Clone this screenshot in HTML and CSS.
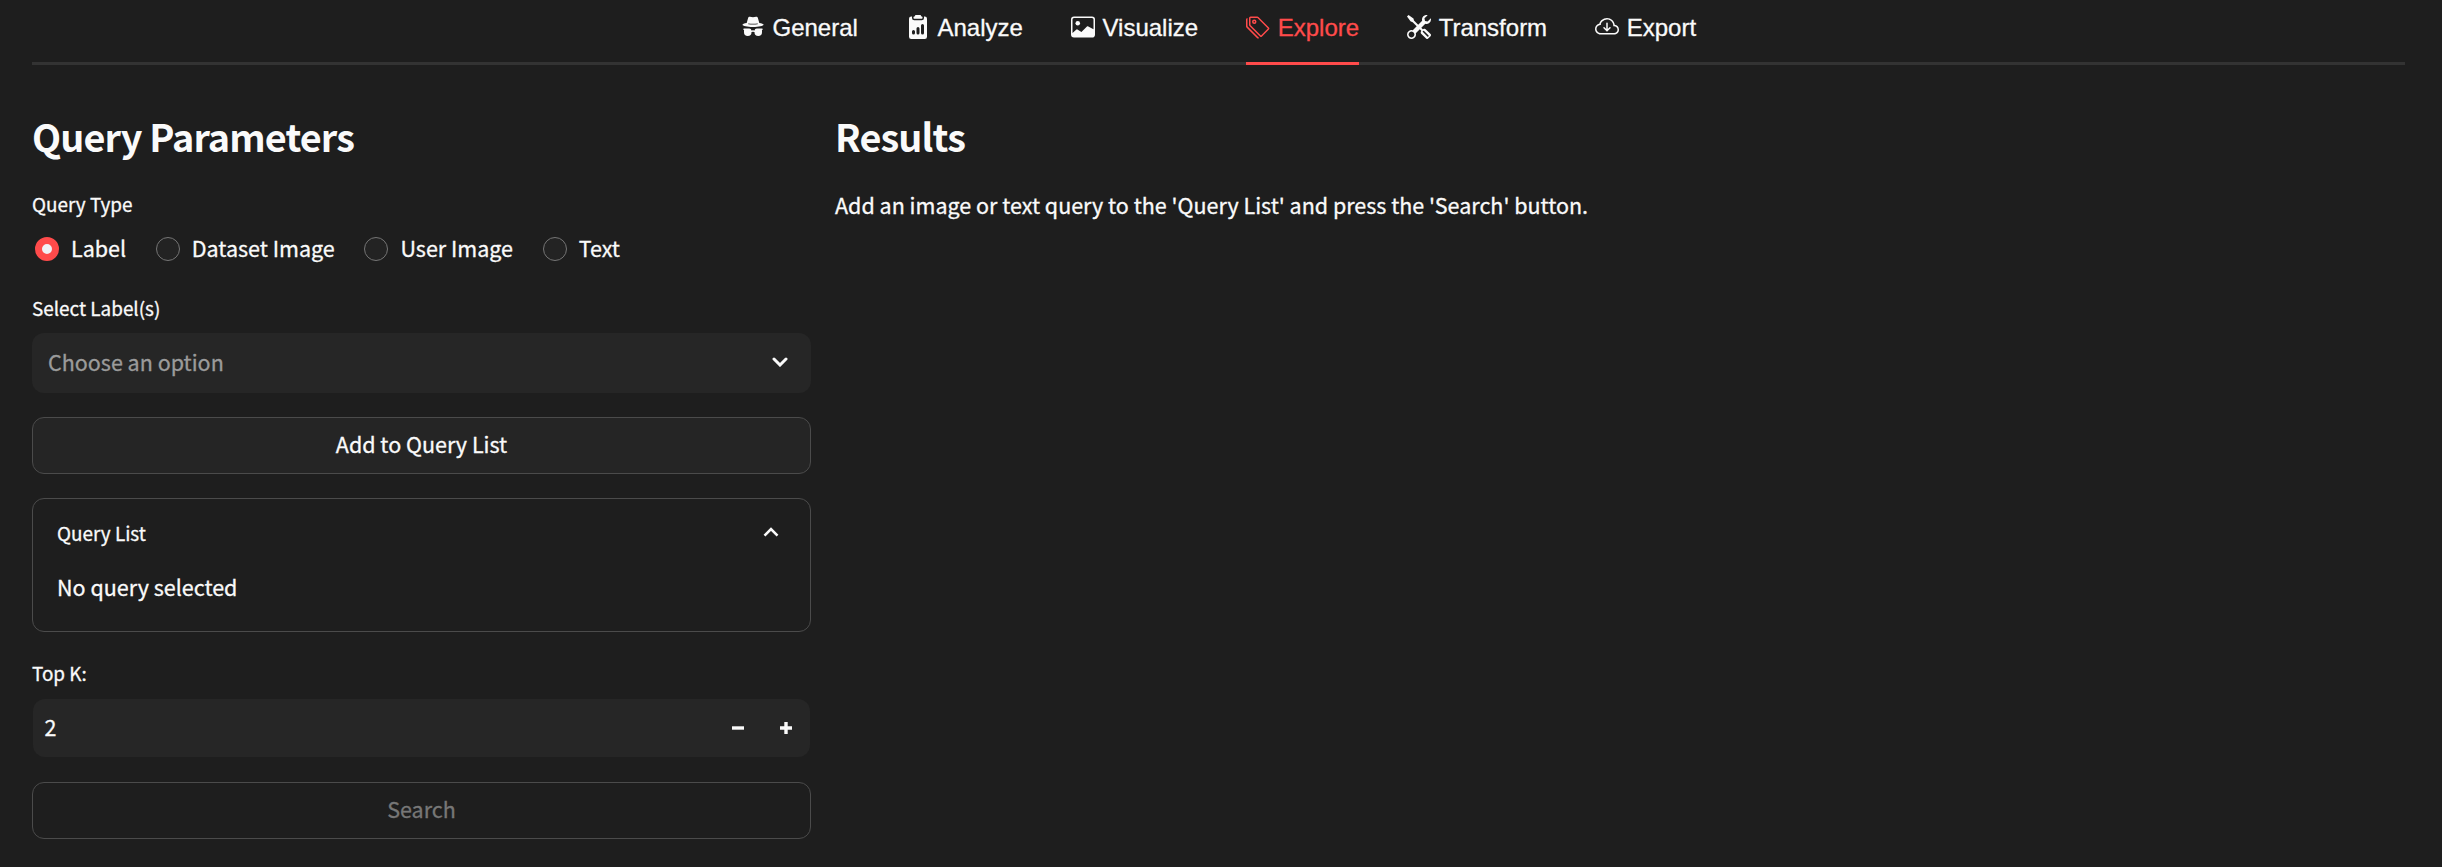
FILE: index.html
```html
<!DOCTYPE html>
<html lang="en">
<head>
<meta charset="utf-8">
<title>Explore</title>
<link rel="stylesheet" href="styles.css">
</head>
<body>
<nav class="tabs">
  <a class="tab"><svg class="icon" viewBox="0 0 16 16"><path fill-rule="evenodd" d="m4.736 1.968-.892 3.269-.014.058C2.113 5.568 1 6.006 1 6.5 1 7.328 4.134 8 8 8s7-.672 7-1.5c0-.494-1.113-.932-2.83-1.205a1.032 1.032 0 0 0-.014-.058l-.892-3.27c-.146-.533-.698-.849-1.239-.734C9.411 1.363 8.62 1.5 8 1.5c-.62 0-1.411-.136-2.025-.267-.541-.115-1.093.2-1.239.735Zm.015 3.867a.25.25 0 0 1 .274-.224c.9.092 1.91.143 2.975.143a29.58 29.58 0 0 0 2.975-.143.25.25 0 0 1 .05.498c-.918.093-1.944.145-3.025.145s-2.107-.052-3.025-.145a.25.25 0 0 1-.224-.274Z"/><path d="M2 10.5c0-.175.03-.344.085-.5H2a.5.5 0 0 1 0-1h3.5a1.5 1.5 0 0 1 1.488 1.312 3.5 3.5 0 0 1 2.024 0A1.5 1.5 0 0 1 10.5 9H14a.5.5 0 0 1 0 1h-.085c.055.156.085.325.085.5v1a2.5 2.5 0 0 1-5 0v-.14l-.21-.07a2.5 2.5 0 0 0-1.58 0l-.21.07v.14a2.5 2.5 0 0 1-5 0v-1Z"/></svg><span>General</span></a>
  <a class="tab"><svg class="icon" viewBox="0 0 16 16"><path d="M10 .5a.5.5 0 0 0-.5-.5h-3a.5.5 0 0 0-.5.5.5.5 0 0 1-.5.5.5.5 0 0 0-.5.5V2a.5.5 0 0 0 .5.5h5A.5.5 0 0 0 11 2v-.5a.5.5 0 0 0-.5-.5.5.5 0 0 1-.5-.5Z"/><path d="M4.085 1H3.5A1.5 1.5 0 0 0 2 2.5v12A1.5 1.5 0 0 0 3.5 16h9a1.5 1.5 0 0 0 1.5-1.5v-12A1.5 1.5 0 0 0 12.5 1h-.585c.055.156.085.325.085.5V2a1.5 1.5 0 0 1-1.5 1.5h-5A1.5 1.5 0 0 1 4 2v-.5c0-.175.03-.344.085-.5ZM10 7a1 1 0 1 1 2 0v5a1 1 0 1 1-2 0V7Zm-6 4a1 1 0 1 1 2 0v1a1 1 0 1 1-2 0v-1Zm4-3a1 1 0 0 1 1 1v3a1 1 0 1 1-2 0V9a1 1 0 0 1 1-1Z"/></svg><span>Analyze</span></a>
  <a class="tab"><svg class="icon" viewBox="0 0 16 16"><path d="M6.002 5.5a1.5 1.5 0 1 1-3 0 1.5 1.5 0 0 1 3 0z"/><path d="M2.002 1a2 2 0 0 0-2 2v10a2 2 0 0 0 2 2h12a2 2 0 0 0 2-2V3a2 2 0 0 0-2-2h-12zm12 1a1 1 0 0 1 1 1v6.5l-3.777-1.947a.5.5 0 0 0-.577.093l-3.71 3.71-2.66-1.772a.5.5 0 0 0-.63.062L1.002 12V3a1 1 0 0 1 1-1h12z"/></svg><span>Visualize</span></a>
  <a class="tab active"><svg class="icon" viewBox="0 0 16 16"><path d="M3 2v4.586l7 7L14.586 9l-7-7H3zM2 2a1 1 0 0 1 1-1h4.586a1 1 0 0 1 .707.293l7 7a1 1 0 0 1 0 1.414l-4.586 4.586a1 1 0 0 1-1.414 0l-7-7A1 1 0 0 1 2 6.586V2z"/><path d="M5.5 5a.5.5 0 1 1 0-1 .5.5 0 0 1 0 1zm0 1a1.5 1.5 0 1 0 0-3 1.5 1.5 0 0 0 0 3zM1 7.086a1 1 0 0 0 .293.707L8.75 15.25l-.043.043a1 1 0 0 1-1.414 0l-7-7A1 1 0 0 1 0 7.586V3a1 1 0 0 1 1-1v5.086z"/></svg><span>Explore</span></a>
  <a class="tab"><svg class="icon" viewBox="0 0 16 16"><path d="M1 0 0 1l2.2 3.081a1 1 0 0 0 .815.419h.07a1 1 0 0 1 .708.293l2.675 2.675-2.617 2.654A3.003 3.003 0 0 0 0 13a3 3 0 1 0 5.878-.851l2.654-2.617.968.968-.305.914a1 1 0 0 0 .242 1.023l3.27 3.27a.997.997 0 0 0 1.414 0l1.586-1.586a.997.997 0 0 0 0-1.414l-3.27-3.27a1 1 0 0 0-1.023-.242L10.5 9.5l-.96-.96 2.68-2.643A3.005 3.005 0 0 0 16 3c0-.269-.035-.53-.102-.777l-2.14 2.141L12 4l-.364-1.757L13.777.102a3 3 0 0 0-3.675 3.68L7.462 6.46 4.793 3.793a1 1 0 0 1-.293-.707v-.071a1 1 0 0 0-.419-.814L1 0Zm9.646 10.646a.5.5 0 0 1 .708 0l2.914 2.915a.5.5 0 0 1-.707.707l-2.915-2.914a.5.5 0 0 1 0-.708ZM3 11l.471.242.529.026.287.445.445.287.026.529L5 13l-.242.471-.026.529-.445.287-.287.445-.529.026L3 15l-.471-.242L2 14.732l-.287-.445L1.268 14l-.026-.529L1 13l.242-.471.026-.529.445-.287.287-.445.529-.026L3 11Z"/></svg><span>Transform</span></a>
  <a class="tab"><svg class="icon" viewBox="0 0 16 16"><path d="M7.646 10.854a.5.5 0 0 0 .708 0l2-2a.5.5 0 0 0-.708-.708L8.5 9.293V5.5a.5.5 0 0 0-1 0v3.793L6.354 8.146a.5.5 0 1 0-.708.708l2 2z"/><path d="M4.406 3.342A5.53 5.53 0 0 1 8 2c2.69 0 4.923 2 5.166 4.579C14.758 6.804 16 8.137 16 9.773 16 11.569 14.502 13 12.687 13H3.781C1.708 13 0 11.366 0 9.318c0-1.763 1.266-3.223 2.942-3.593.143-.863.698-1.723 1.464-2.383zm.653.757c-.757.653-1.153 1.44-1.153 2.056v.448l-.445.049C2.064 6.805 1 7.952 1 9.318 1 10.785 2.23 12 3.781 12h8.906C13.98 12 15 10.988 15 9.773c0-1.216-1.02-2.228-2.313-2.228h-.5v-.5C12.188 4.825 10.328 3 8 3a4.53 4.53 0 0 0-2.941 1.1z"/></svg><span>Export</span></a>
</nav>
<main class="columns">
  <section class="params">
    <h2 class="heading">Query Parameters</h2>
    <div class="label label-type">Query Type</div>
    <div class="radios">
      <label class="radio"><span class="dot checked"></span><span>Label</span></label>
      <label class="radio"><span class="dot"></span><span>Dataset Image</span></label>
      <label class="radio"><span class="dot"></span><span>User Image</span></label>
      <label class="radio"><span class="dot"></span><span>Text</span></label>
    </div>
    <div class="label">Select Label(s)</div>
    <div class="select">
      <span>Choose an option</span>
      <svg class="chevron" viewBox="0 0 16 10"><path d="M2 2l6 6 6-6" stroke-linecap="round"/></svg>
    </div>
    <button class="button add">Add to Query List</button>
    <div class="expander">
      <div class="expander-head">
        <span>Query List</span>
        <svg class="chevron up" viewBox="0 0 16 10"><path d="M1.500 8.600L8 2.100l6.500 6.500"/></svg>
      </div>
      <div class="expander-body">No query selected</div>
    </div>
    <div class="label label-top">Top K:</div>
    <div class="number">
      <span class="value">2</span>
      <svg class="step" viewBox="0 0 12 12"><path d="M0 4.300h12v3.400H0z"/></svg>
      <svg class="step" viewBox="0 0 12 12"><path d="M0 4.300h4.300V0h3.400v4.300H12v3.400H7.700V12h-3.400V7.700H0z"/></svg>
    </div>
    <button class="button search" disabled>Search</button>
  </section>
  <section class="results">
    <h2 class="heading">Results</h2>
    <p class="message">Add an image or text query to the 'Query List' and press the 'Search' button.</p>
  </section>
</main>
</body>
</html>
```
FILE: styles.css
```css
* { box-sizing: border-box; }
body {
  margin: 0;
  padding: 0 37px 0 32px;
  height: 867px;
  overflow: hidden;
  background: #1e1e1e;
  color: #fafafa;
  font-family: "Noto Sans CJK SC", sans-serif;
  font-size: 21.5px;
  -webkit-text-stroke: 0.3px currentColor;
}
.tabs {
  display: flex;
  justify-content: center;
  gap: 48px;
  height: 65px;
  border-bottom: 3px solid #333;
}
.tab {
  display: flex;
  gap: 7.6px;
  height: 65px;
  padding-top: 15px;
  font: 24px/26px "Liberation Sans", Arial, sans-serif;
}
.tab.active { color: #ff4b4b; border-bottom: 3px solid #ff4b4b; }
.icon { width: 24px; height: 24px; fill: currentColor; }
.columns {
  display: grid;
  grid-template-columns: 779px 1fr;
  gap: 24px;
  padding-top: 46px;
}
.params { display: flex; flex-direction: column; }
.heading {
  margin: 0;
  font-size: 37.8px;
  line-height: 49px;
  font-weight: 600;
  letter-spacing: -0.88px;
  -webkit-text-stroke: 0;
}
.label { font-size: 18.9px; line-height: 30px; }
.label-type { margin-top: 29px; }
.radios { display: flex; gap: 29.7px; height: 24px; margin: 18px 0 32px; padding-left: 3px; }
.radio { display: flex; gap: 12px; line-height: 21px; }
.dot { width: 24px; height: 24px; border-radius: 50%; border: 1.5px solid #757575; background: #232323; }
.dot.checked { border: 7.5px solid #ff4b4b; background: #f0f2f6; }
.select {
  display: flex;
  justify-content: space-between;
  align-items: center;
  height: 60px;
  margin: 10px 0 24px;
  padding: 0 23px 3px 16px;
  border-radius: 12px;
  background: #262626;
  color: #9b9b9b;
}
.chevron { width: 16px; height: 10px; fill: none; stroke: #fafafa; stroke-width: 3; }
.button {
  height: 57px;
  padding: 0 0 4px;
  border: 1px solid #4b4b4b;
  border-radius: 12px;
  background: #252525;
  color: #fafafa;
  font: inherit;
  line-height: 50px;
}
.expander {
  height: 134px;
  margin: 24px 0 26px;
  padding: 17px 31px 0 24px;
  border: 1px solid #4b4b4b;
  border-radius: 12px;
}
.expander-head { display: flex; justify-content: space-between; font-size: 18.9px; line-height: 34px; }
.expander-head .up { margin-top: 11px; stroke-width: 2.6; }
.expander-body { margin-top: 21px; line-height: 32px; }
.number {
  display: flex;
  align-items: center;
  gap: 36px;
  height: 58px;
  margin: 11px 1px 25px;
  padding: 0 18px 0 11.5px;
  border-radius: 12px;
  background: #262626;
}
.value { flex: 1; padding-bottom: 3px; }
.step { width: 12px; height: 12px; fill: #fafafa; }
.search { background: transparent; color: #777; }
.message { margin: 29px 0 0; line-height: 31px; }
```
